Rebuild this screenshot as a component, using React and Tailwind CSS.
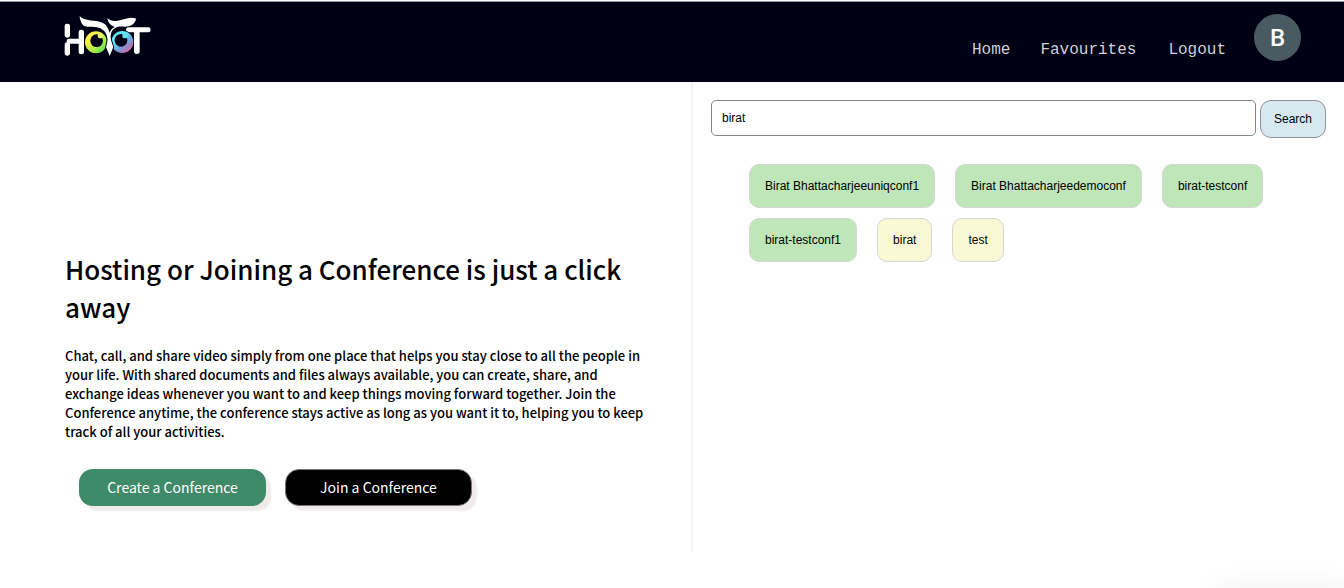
const conferences = [
  { name: "Birat Bhattacharjeeuniqconf1", owned: true },
  { name: "Birat Bhattacharjeedemoconf", owned: true },
  { name: "birat-testconf", owned: true },
  { name: "birat-testconf1", owned: true },
  { name: "birat", owned: false },
  { name: "test", owned: false },
];

function Logo() {
  return (
    <svg viewBox="42 46 264 126" className="h-[42px] w-[88px]" role="img" aria-label="Hoot">
      <defs>
        <linearGradient id="leftEye" x1="0" y1="0" x2="1" y2="1">
          <stop offset="0.25" stopColor="#fbf04b" />
          <stop offset="0.6" stopColor="#b4ee4c" />
          <stop offset="1" stopColor="#35df55" />
        </linearGradient>
        <linearGradient id="rightEye" x1="0.1" y1="0" x2="0.9" y2="1">
          <stop offset="0.35" stopColor="#5fe6f0" />
          <stop offset="0.6" stopColor="#6fa3dc" />
          <stop offset="0.95" stopColor="#e0559c" />
        </linearGradient>
      </defs>
      <g fill="#fff">
        <rect x="44" y="72" width="16" height="42" rx="7" />
        <rect x="44" y="128" width="16" height="40" rx="7" />
        <rect x="50" y="117" width="46" height="15" rx="7" />
        <rect x="86" y="90" width="16" height="74" rx="7" />
        <rect x="228" y="83" width="74" height="15" rx="7" />
        <rect x="252" y="84" width="17" height="79" rx="8" />
      </g>
      <circle cx="138" cy="127" r="36" fill="#000014" />
      <circle cx="217" cy="126" r="34" fill="#000014" />
      <circle cx="138" cy="128" r="33" fill="url(#leftEye)" />
      <circle cx="217" cy="127" r="33" fill="url(#rightEye)" />
      <circle cx="140" cy="123" r="19" fill="#000014" />
      <circle cx="213" cy="122" r="19" fill="#000014" />
      <circle cx="151" cy="108" r="8" fill="#e8f36a" />
      <circle cx="225" cy="108" r="8" fill="#5fe6f0" />
      <path
        d="M172 56C180 62 188 65 198 64C220 62 236 49 259 57C255 69 247 77 238 79C226 83 214 79 203 82C189 86 182 96 182 112C182 122 186 130 190 142L179 169L168 142C172 130 174 122 171 110C167 94 155 86 141 83C122 79 103 86 96 72C92 65 89 58 89 49C99 60 115 62 138 64C162 66 174 79 179 100C181 91 187 85 194 82C182 77 174 70 172 56Z"
        fill="#fff"
        stroke="#000014"
        strokeWidth="5"
        paintOrder="stroke"
      />
    </svg>
  );
}

export default function App() {
  return (
    <div className="bg-white font-['Noto_Sans_CJK_JP',sans-serif] text-black">
      <header className="mt-px flex h-[81px] items-start justify-between border-t border-[#8f99a3] bg-[#000014] pr-[43px] pl-16">
        <a href="#home" className="mt-[13px]">
          <Logo />
        </a>
        <nav className="flex items-start font-['Liberation_Mono',monospace] text-base leading-6 text-[#d0d0d6]">
          <a href="#home" className="mt-9 mr-[30px]">Home</a>
          <a href="#favourites" className="mt-9 mr-8">Favourites</a>
          <a href="#logout" className="mt-9 mr-7">Logout</a>
          <div className="mt-3 flex size-[47px] items-center justify-center rounded-full bg-[#495a62] font-[Roboto,sans-serif] text-2xl font-medium text-white">
            B
          </div>
        </nav>
      </header>

      <main className="grid grid-cols-[minmax(0,693fr)_minmax(0,651fr)]">
        <section className="border-r-2 border-[#f6f4f4] pt-[168px] pr-10 pb-[46px] pl-[65px]">
          <h1 className="text-[26px] leading-[38px] font-medium">
            Hosting or Joining a Conference is just a click away
          </h1>
          <p className="mt-5 text-[13px] leading-[19px] font-medium">
            Chat, call, and share video simply from one place that helps you stay close to all the
            people in your life. With shared documents and files always available, you can create,
            share, and exchange ideas whenever you want to and keep things moving forward together.
            Join the Conference anytime, the conference stays active as long as you want it to,
            helping you to keep track of all your activities.
          </p>
          <div className="mt-7 ml-3.5 flex gap-[19px]">
            <button className="h-[37px] w-[187px] rounded-[14px] bg-[#3f8a68] pb-0.5 text-sm text-white shadow-[5px_5px_2px_#efebeb]">
              Create a Conference
            </button>
            <button className="h-[37px] w-[187px] rounded-[14px] border border-[#777] bg-black pb-0.5 text-sm text-white shadow-[5px_5px_2px_#efebeb]">
              Join a Conference
            </button>
          </div>
        </section>

        <section className="pt-[18px] pr-[18px] pl-[18px] font-['Liberation_Sans',Arial,sans-serif] text-xs">
          <form className="flex items-start gap-1" onSubmit={(e) => e.preventDefault()}>
            <input
              type="text"
              aria-label="Search conferences"
              defaultValue="birat"
              className="h-9 min-w-0 flex-1 rounded-[5px] border border-[#858585] px-2.5 outline-none"
            />
            <button className="h-[38px] w-[66px] rounded-[11px] border border-[#8f9496] bg-[#d7e8f1]">
              Search
            </button>
          </form>
          <ul className="mt-[26px] flex flex-wrap gap-x-5 gap-y-2.5 px-[38px]">
            {conferences.map((c) => (
              <li key={c.name}>
                <button
                  className={
                    "h-11 rounded-[10px] border border-[#d6d6d6] px-[15px] " +
                    (c.owned ? "bg-[#bfe6b8]" : "bg-[#f9f9d6]")
                  }
                >
                  {c.name}
                </button>
              </li>
            ))}
          </ul>
        </section>
      </main>

      <div className="flex h-9 items-end justify-end overflow-hidden">
        <div className="h-px w-[120px] translate-y-2 shadow-[0_0_28px_6px_rgba(0,0,0,0.09)]" />
      </div>
    </div>
  );
}
